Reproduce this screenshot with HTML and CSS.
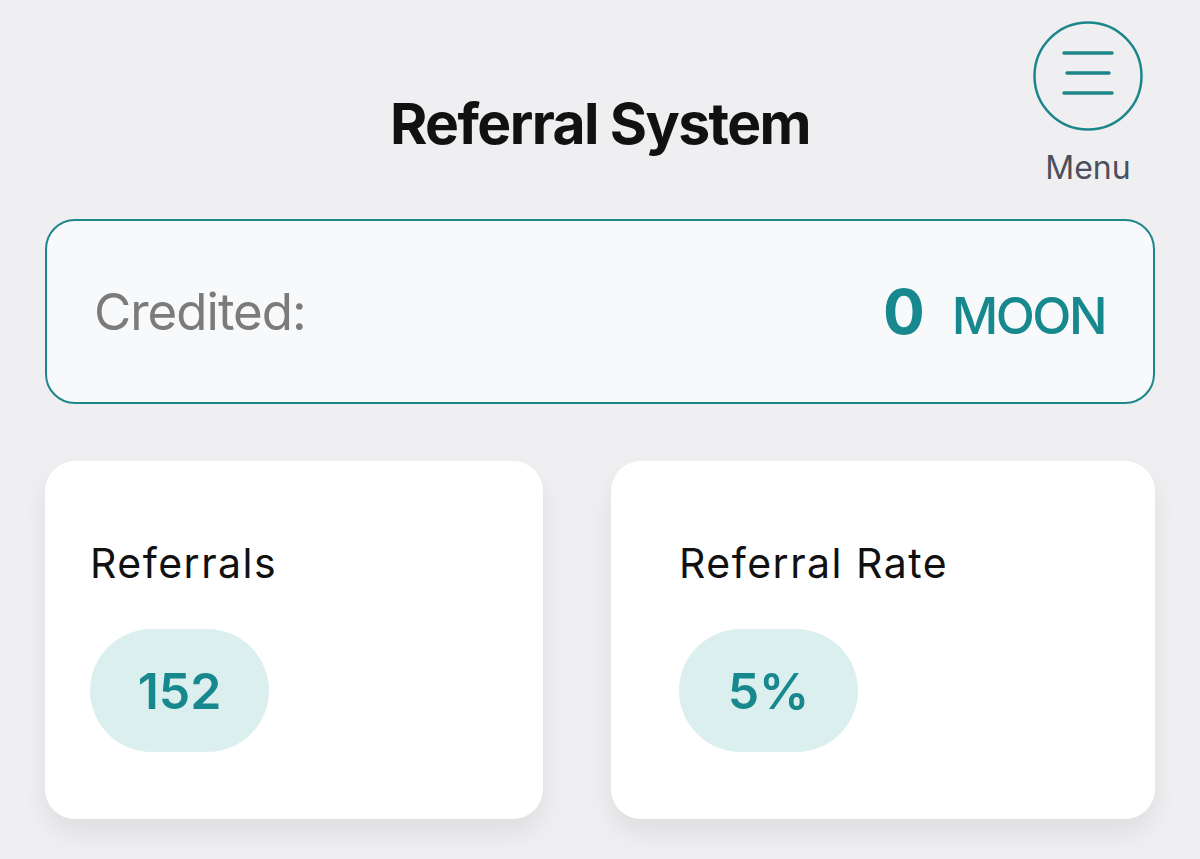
FILE: index.html
```html
<!DOCTYPE html>
<html lang="en">
  <head>
    <meta charset="UTF-8" />
    <meta name="viewport" content="width=device-width, initial-scale=1.0" />
    <title>Referral System</title>
    <link rel="stylesheet" href="styles.css">
  </head>
  <body>
    <div class="page">
      <!-- Header -->
      <header class="top-bar">
        <div></div>
        <h1 class="page-title">Referral System</h1>
        <button class="menu-btn" type="button">
          <svg class="menu-icon" width="110" height="110" viewBox="0 0 110 110">
            <circle cx="55" cy="55" r="53.5" fill="none" stroke="#1d868b" stroke-width="2.5" />
            <line x1="31" y1="32" x2="79" y2="32" stroke="#1d868b" stroke-width="3.5" stroke-linecap="round" />
            <line x1="34" y1="52" x2="76" y2="52" stroke="#1d868b" stroke-width="3.5" stroke-linecap="round" />
            <line x1="31" y1="72" x2="79" y2="72" stroke="#1d868b" stroke-width="3.5" stroke-linecap="round" />
          </svg>
          <span class="menu-label">Menu</span>
        </button>
      </header>

      <!-- Credited balance -->
      <div class="credited">
        <span class="credited-label">Credited:</span>
        <span class="credited-value">
          <span class="amount">0</span>
          <span class="unit">MOON</span>
        </span>
      </div>

      <!-- Stats -->
      <div class="stats">
        <div class="stat-card">
          <div class="stat-title">Referrals</div>
          <div class="stat-pill">152</div>
        </div>
        <div class="stat-card stat-card-wide">
          <div class="stat-title">Referral Rate</div>
          <div class="stat-pill">5%</div>
        </div>
      </div>
    </div>
  </body>
</html>
```

FILE: styles.css
```css
body {
  margin: 0;
  background-color: #efeff1;
  font-family: Inter, "Noto Sans", sans-serif;
  color: #111;
}

.page {
  padding: 21px 45px 40px;
}

/* Header */
.top-bar {
  display: grid;
  grid-template-columns: 1fr auto 1fr;
  align-items: start;
}
.page-title {
  margin: 69px 0 0;
  font-size: 57px;
  line-height: 68px;
  font-weight: 700;
  letter-spacing: -1.6px;
  color: #111;
}
.menu-btn {
  justify-self: end;
  margin-right: 12px;
  padding: 0;
  border: none;
  background: none;
  display: flex;
  flex-direction: column;
  align-items: center;
  cursor: pointer;
  font-family: inherit;
}
.menu-icon {
  display: block;
}
.menu-label {
  margin-top: 17px;
  font-size: 32px;
  line-height: 40px;
  color: #4b505c;
}

/* Credited box */
.credited {
  margin-top: 31px;
  height: 185px;
  box-sizing: border-box;
  border: 2.5px solid #1d868b;
  border-radius: 30px;
  background-color: #f8f9fb;
  padding: 0 48px 0 47px;
  display: flex;
  align-items: center;
  justify-content: space-between;
}
.credited-label {
  font-size: 51px;
  letter-spacing: -1px;
  color: #7b7b7b;
}
.credited-value {
  display: flex;
  align-items: baseline;
  gap: 27px;
  color: #17888d;
}
.amount {
  font-size: 62px;
  font-weight: 700;
}
.unit {
  font-size: 51px;
  font-weight: 500;
  letter-spacing: -2.5px;
}

/* Stat cards */
.stats {
  margin-top: 57px;
  display: grid;
  grid-template-columns: 498px 1fr;
  gap: 68px;
}
.stat-card {
  background-color: #fff;
  border-radius: 30px;
  padding: 77px 45px 67px;
  box-shadow: 0 14px 26px rgba(0, 0, 0, 0.07);
}
.stat-card-wide {
  padding-left: 68px;
}
.stat-title {
  font-size: 41px;
  line-height: 50px;
  letter-spacing: 1.5px;
  color: #111;
}
.stat-pill {
  margin-top: 41px;
  width: 179px;
  height: 123px;
  border-radius: 62px;
  background-color: #dcefef;
  color: #17888d;
  font-size: 50px;
  font-weight: 600;
  display: flex;
  align-items: center;
  justify-content: center;
}
```
